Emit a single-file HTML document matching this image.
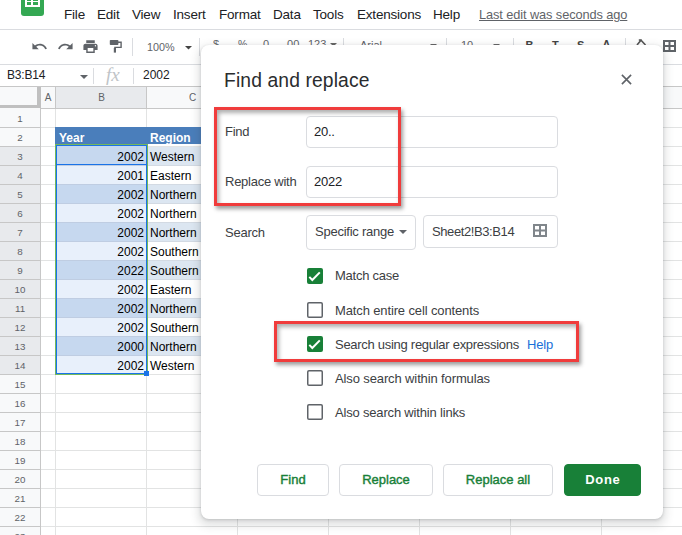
<!DOCTYPE html>
<html><head><meta charset="utf-8">
<style>
*{box-sizing:border-box;margin:0;padding:0}
html,body{width:682px;height:535px;overflow:hidden;background:#fff}
body{position:relative;font-family:"Liberation Sans",sans-serif;color:#202124}
.a{position:absolute;white-space:pre}
.menu{font-size:13.5px;color:#202124;top:7.2px;line-height:16px;letter-spacing:-0.2px}
.ln{position:absolute;background:#dadce0}
.ic{position:absolute;width:17px;height:17px;fill:#5f6368}
.tb{position:absolute;font-size:12px;color:#5f6368;line-height:14px}
.vs{position:absolute;width:1px;background:#dadce0}
/* grid */
.rh{position:absolute;left:0;width:40px;height:19px;background:#f8f9fa;font-size:9.8px;overflow:hidden;color:#5f6368;text-align:center;line-height:19px}
.hl{position:absolute;height:1px;background:#e2e3e3}
.vl{position:absolute;width:1px;background:#e2e3e3}
.cell{position:absolute;font-size:12px;line-height:19px;color:#000}
/* dialog */
#dlg{position:absolute;left:201px;top:45px;width:462px;height:474px;background:#fff;border-radius:8px;
 box-shadow:0 1px 3px 0 rgba(60,64,67,.22),0 4px 8px 3px rgba(60,64,67,.15)}
.lbl{position:absolute;font-size:13px;color:#3c4043;letter-spacing:-0.25px;line-height:16px}
.inp{position:absolute;border:1px solid #dadce0;border-radius:4px;background:#fff}
.cb{position:absolute;width:16px;height:16px;border:2px solid #5f6368;border-radius:2px}
.cbo{position:absolute;width:16px;height:16px;border-radius:2px;box-shadow:inset 0 0 0 1.5px #5f6368}
.cbon{background:#188038;border-color:#188038}
.btn{position:absolute;top:464px;height:32px;border:1px solid #dadce0;border-radius:4px;background:#fff;color:#188038;font-size:13px;font-weight:400;-webkit-text-stroke:0.4px #188038;text-align:center;line-height:30px}
.red{position:absolute;border:3px solid #f03c3c;box-shadow:2px 3px 4px rgba(0,0,0,.38),inset 2px 3px 4px rgba(0,0,0,.32)}
</style></head><body>

<!-- logo -->
<div class="a" style="left:21px;top:-10px;width:23px;height:26px;background:#34a853;border-radius:3px"></div>
<div class="a" style="left:25px;top:-4px;width:15px;height:11px;background:#fff"></div>
<div class="a" style="left:27px;top:-2px;width:4px;height:3px;background:#34a853"></div>
<div class="a" style="left:33px;top:-2px;width:5px;height:3px;background:#34a853"></div>
<div class="a" style="left:27px;top:2px;width:4px;height:3px;background:#34a853"></div>
<div class="a" style="left:33px;top:2px;width:5px;height:3px;background:#34a853"></div>

<!-- menu -->
<div class="a menu" style="left:64px">File</div>
<div class="a menu" style="left:97px">Edit</div>
<div class="a menu" style="left:132px">View</div>
<div class="a menu" style="left:173px">Insert</div>
<div class="a menu" style="left:219px">Format</div>
<div class="a menu" style="left:273px">Data</div>
<div class="a menu" style="left:313px">Tools</div>
<div class="a menu" style="left:357px">Extensions</div>
<div class="a menu" style="left:433px">Help</div>
<div class="a menu" style="left:479px;color:#5f6368;font-size:12.8px;letter-spacing:-0.1px;top:7px;text-decoration:underline">Last edit was seconds ago</div>

<div class="ln" style="left:0;top:29px;width:682px;height:1px"></div>

<!-- toolbar -->
<svg class="ic" style="left:31px;top:37.8px" viewBox="0 0 24 24"><path d="M12.5 8c-2.65 0-5.050.99-6.9 2.6L2 7v9h9l-3.62-3.62c1.39-1.16 3.160-1.880 5.12-1.88 3.54 0 6.55 2.31 7.6 5.5l2.37-.78C21.08 11.03 17.15 8 12.5 8z"/></svg>
<svg class="ic" style="left:57px;top:37.8px" viewBox="0 0 24 24"><path d="M18.4 10.6C16.55 8.99 14.15 8 11.5 8c-4.65 0-8.58 3.03-9.96 7.22L3.9 16c1.05-3.19 4.05-5.5 7.6-5.5 1.95 0 3.73.72 5.12 1.88L13 16h9V7l-3.6 3.6z"/></svg>
<svg class="ic" style="left:82.1px;top:38px" viewBox="0 0 24 24"><path d="M19 8H5c-1.66 0-3 1.34-3 3v6h4v4h12v-4h4v-6c0-1.66-1.34-3-3-3zm-3 11H8v-5h8v5zm3-7c-.55 0-1-.45-1-1s.45-1 1-1 1 .45 1 1-.45 1-1 1zm-1-9H6v4h12V3z"/></svg>
<svg class="a" style="left:109px;top:39px" width="14" height="15" viewBox="0 0 14 15"><rect x="0.8" y="1" width="8.6" height="5" rx="0.8" fill="#5f6368"/><path d="M9 3.3h3.1v5.1H5.9v1.2" stroke="#5f6368" stroke-width="1.4" fill="none"/><rect x="4.8" y="9" width="2.2" height="4.6" fill="#5f6368"/></svg>
<div class="vs" style="left:132px;top:38px;height:18px"></div>
<div class="tb" style="left:147px;top:39.5px;font-size:10.8px">100%</div>
<svg class="a" style="left:185px;top:45.7px" width="7" height="4"><path d="M0 0h7L3.5 3.5z" fill="#444"/></svg>
<div class="vs" style="left:199px;top:38px;height:18px"></div>
<div class="tb" style="left:213px;top:36.5px;font-size:11px">$</div>
<div class="tb" style="left:238px;top:37px;font-size:10.5px">%</div>
<div class="tb" style="left:260px;top:36.5px;font-size:11px">.0</div>
<div class="tb" style="left:284px;top:36.5px;font-size:11px">.00</div>
<div class="tb" style="left:308px;top:36.5px;font-size:11px">123</div>
<svg class="a" style="left:330px;top:43px" width="7" height="4"><path d="M0 0h7L3.5 3.5z" fill="#666"/></svg>
<div class="vs" style="left:343px;top:38px;height:18px"></div>
<div class="tb" style="left:360px;top:37.5px;font-size:11px">Arial</div>
<svg class="a" style="left:430px;top:43.5px" width="7" height="4"><path d="M0 0h7L3.5 3.5z" fill="#666"/></svg>
<div class="vs" style="left:446px;top:38px;height:18px"></div>
<div class="tb" style="left:461px;top:37.5px;font-size:11px">10</div>
<svg class="a" style="left:493px;top:43.5px" width="7" height="4"><path d="M0 0h7L3.5 3.5z" fill="#666"/></svg>
<div class="vs" style="left:513px;top:38px;height:18px"></div>
<div class="tb" style="left:525.5px;top:37.5px;font-weight:700;font-size:11px;color:#444">B</div>
<div class="tb" style="left:552px;top:37.5px;font-weight:700;font-size:11px;color:#444">T</div>
<div class="tb" style="left:577px;top:37.5px;font-weight:700;font-size:11px;color:#444">S</div>
<div class="tb" style="left:602.5px;top:37px;font-weight:700;font-size:11px;color:#444">A</div>
<div class="vs" style="left:625px;top:38px;height:18px"></div>
<svg class="a" style="left:636px;top:38px" width="11" height="8"><path d="M1 7L5 2.2l4.5 4.8M2.8 2h3" stroke="#555" stroke-width="1.6" fill="none"/></svg>
<!-- borders icon -->
<svg class="a" style="left:663px;top:40px" width="13" height="12" viewBox="0 0 13 12"><path d="M0 0h13v12H0zM2 2v3h3.5V2zm5.5 0v3H11V2zM2 7v3h3.5V7zm5.5 0v3H11V7z" fill="#5f6368" fill-rule="evenodd"/></svg>

<div class="ln" style="left:0;top:64px;width:682px;height:1px"></div>

<!-- formula bar -->
<div class="a" style="left:7px;top:68px;font-size:12px;line-height:14px;color:#202124;letter-spacing:-0.2px">B3:B14</div>
<svg class="a" style="left:80px;top:75px" width="8" height="4"><path d="M0 0h8L4 4z" fill="#5f6368"/></svg>
<div class="vs" style="left:93px;top:68px;height:16px"></div>
<div class="a" style="left:106px;top:65px;font-family:'Liberation Serif',serif;font-style:italic;font-size:19px;line-height:20px;color:#c0c4c8">fx</div>
<div class="vs" style="left:133px;top:68px;height:16px"></div>
<div class="a" style="left:143px;top:68px;font-size:12px;line-height:14px;color:#202124">2002</div>

<div class="ln" style="left:0;top:86px;width:682px;height:1px;background:#c7c7c7"></div>

<!-- header row -->
<div class="a" style="left:0;top:87px;width:682px;height:21px;background:#f8f9fa"></div>
<div class="a" style="left:56px;top:87px;width:90px;height:21px;background:#e8eaed"></div>
<div class="a" style="left:37px;top:87px;width:4px;height:22px;background:#c0c0c0"></div>
<div class="a" style="left:0;top:105px;width:41px;height:4px;background:#c0c0c0"></div>
<div class="a" style="left:0;top:108px;width:682px;height:1px;background:#c7c7c7"></div>
<div class="a" style="left:55px;top:87px;width:1px;height:21px;background:#c7c7c7"></div>
<div class="a" style="left:146px;top:87px;width:1px;height:21px;background:#c7c7c7"></div>
<div class="a" style="left:41px;top:87px;width:14px;height:21px;font-size:10px;line-height:21px;text-align:center;color:#5f6368">A</div>
<div class="a" style="left:56px;top:87px;width:91px;height:21px;font-size:10px;line-height:21px;text-align:center;color:#5f6368">B</div>
<div class="a" style="left:147px;top:87px;width:91px;height:21px;font-size:10px;line-height:21px;text-align:center;color:#5f6368">C</div>

<div id="grid">
<div class="rh" style="top:108px;height:19px;background:#f8f9fa;line-height:22px">1</div>
<div class="rh" style="top:127px;height:19px;background:#f8f9fa;line-height:22px">2</div>
<div class="rh" style="top:146px;height:19px;background:#e8eaed;line-height:22px">3</div>
<div class="rh" style="top:165px;height:19px;background:#e8eaed;line-height:22px">4</div>
<div class="rh" style="top:184px;height:19px;background:#e8eaed;line-height:22px">5</div>
<div class="rh" style="top:203px;height:19px;background:#e8eaed;line-height:22px">6</div>
<div class="rh" style="top:222px;height:19px;background:#e8eaed;line-height:22px">7</div>
<div class="rh" style="top:241px;height:19px;background:#e8eaed;line-height:22px">8</div>
<div class="rh" style="top:260px;height:19px;background:#e8eaed;line-height:22px">9</div>
<div class="rh" style="top:279px;height:19px;background:#e8eaed;line-height:22px">10</div>
<div class="rh" style="top:298px;height:19px;background:#e8eaed;line-height:22px">11</div>
<div class="rh" style="top:317px;height:19px;background:#e8eaed;line-height:22px">12</div>
<div class="rh" style="top:336px;height:19px;background:#e8eaed;line-height:22px">13</div>
<div class="rh" style="top:355px;height:19px;background:#e8eaed;line-height:22px">14</div>
<div class="rh" style="top:374px;height:19px;background:#f8f9fa;line-height:22px">15</div>
<div class="rh" style="top:393px;height:19px;background:#f8f9fa;line-height:22px">16</div>
<div class="rh" style="top:412px;height:19px;background:#f8f9fa;line-height:22px">17</div>
<div class="rh" style="top:431px;height:19px;background:#f8f9fa;line-height:22px">18</div>
<div class="rh" style="top:450px;height:19px;background:#f8f9fa;line-height:22px">19</div>
<div class="rh" style="top:469px;height:19px;background:#f8f9fa;line-height:22px">20</div>
<div class="rh" style="top:488px;height:19px;background:#f8f9fa;line-height:22px">21</div>
<div class="rh" style="top:507px;height:19px;background:#f8f9fa;line-height:22px">22</div>
<div class="rh" style="top:526px;height:19px;background:#f8f9fa;line-height:22px">23</div>
<div class="hl" style="left:0;top:127px;width:40px;background:#c7c7c7"></div>
<div class="hl" style="left:41px;top:127px;width:641px"></div>
<div class="hl" style="left:0;top:146px;width:40px;background:#c7c7c7"></div>
<div class="hl" style="left:41px;top:146px;width:641px"></div>
<div class="hl" style="left:0;top:165px;width:40px;background:#c7c7c7"></div>
<div class="hl" style="left:41px;top:165px;width:641px"></div>
<div class="hl" style="left:0;top:184px;width:40px;background:#c7c7c7"></div>
<div class="hl" style="left:41px;top:184px;width:641px"></div>
<div class="hl" style="left:0;top:203px;width:40px;background:#c7c7c7"></div>
<div class="hl" style="left:41px;top:203px;width:641px"></div>
<div class="hl" style="left:0;top:222px;width:40px;background:#c7c7c7"></div>
<div class="hl" style="left:41px;top:222px;width:641px"></div>
<div class="hl" style="left:0;top:241px;width:40px;background:#c7c7c7"></div>
<div class="hl" style="left:41px;top:241px;width:641px"></div>
<div class="hl" style="left:0;top:260px;width:40px;background:#c7c7c7"></div>
<div class="hl" style="left:41px;top:260px;width:641px"></div>
<div class="hl" style="left:0;top:279px;width:40px;background:#c7c7c7"></div>
<div class="hl" style="left:41px;top:279px;width:641px"></div>
<div class="hl" style="left:0;top:298px;width:40px;background:#c7c7c7"></div>
<div class="hl" style="left:41px;top:298px;width:641px"></div>
<div class="hl" style="left:0;top:317px;width:40px;background:#c7c7c7"></div>
<div class="hl" style="left:41px;top:317px;width:641px"></div>
<div class="hl" style="left:0;top:336px;width:40px;background:#c7c7c7"></div>
<div class="hl" style="left:41px;top:336px;width:641px"></div>
<div class="hl" style="left:0;top:355px;width:40px;background:#c7c7c7"></div>
<div class="hl" style="left:41px;top:355px;width:641px"></div>
<div class="hl" style="left:0;top:374px;width:40px;background:#c7c7c7"></div>
<div class="hl" style="left:41px;top:374px;width:641px"></div>
<div class="hl" style="left:0;top:393px;width:40px;background:#c7c7c7"></div>
<div class="hl" style="left:41px;top:393px;width:641px"></div>
<div class="hl" style="left:0;top:412px;width:40px;background:#c7c7c7"></div>
<div class="hl" style="left:41px;top:412px;width:641px"></div>
<div class="hl" style="left:0;top:431px;width:40px;background:#c7c7c7"></div>
<div class="hl" style="left:41px;top:431px;width:641px"></div>
<div class="hl" style="left:0;top:450px;width:40px;background:#c7c7c7"></div>
<div class="hl" style="left:41px;top:450px;width:641px"></div>
<div class="hl" style="left:0;top:469px;width:40px;background:#c7c7c7"></div>
<div class="hl" style="left:41px;top:469px;width:641px"></div>
<div class="hl" style="left:0;top:488px;width:40px;background:#c7c7c7"></div>
<div class="hl" style="left:41px;top:488px;width:641px"></div>
<div class="hl" style="left:0;top:507px;width:40px;background:#c7c7c7"></div>
<div class="hl" style="left:41px;top:507px;width:641px"></div>
<div class="hl" style="left:0;top:526px;width:40px;background:#c7c7c7"></div>
<div class="hl" style="left:41px;top:526px;width:641px"></div>
<div class="hl" style="left:0;top:545px;width:40px;background:#c7c7c7"></div>
<div class="hl" style="left:41px;top:545px;width:641px"></div>
<div class="vl" style="left:40px;top:109px;height:426px;background:#c7c7c7"></div>
<div class="vl" style="left:55px;top:109px;height:426px"></div>
<div class="vl" style="left:146px;top:109px;height:426px"></div>
<div class="vl" style="left:237px;top:109px;height:426px"></div>
<div class="vl" style="left:328px;top:109px;height:426px"></div>
<div class="vl" style="left:419px;top:109px;height:426px"></div>
<div class="vl" style="left:510px;top:109px;height:426px"></div>
<div class="vl" style="left:601px;top:109px;height:426px"></div>
<div class="a" style="left:55px;top:127px;width:183px;height:17px;background:#4a7ebb"></div>
<div class="cell" style="left:59px;top:129px;color:#fff;font-weight:700">Year</div>
<div class="cell" style="left:150px;top:129px;color:#fff;font-weight:700">Region</div>
<div class="a" style="left:56px;top:146px;width:90px;height:19px;background:#c6d8ef"></div>
<div class="a" style="left:147px;top:147px;width:90px;height:18px;background:#dce6f1"></div>
<div class="cell" style="left:56px;top:148px;width:88px;text-align:right">2002</div>
<div class="cell" style="left:150px;top:148px">Western</div>
<div class="a" style="left:56px;top:165px;width:90px;height:19px;background:#e8f0fb"></div>
<div class="a" style="left:56px;top:165px;width:90px;height:1px;background:#bfcde2"></div>
<div class="a" style="left:147px;top:165px;width:91px;height:1px;background:#d3dae3"></div>
<div class="a" style="left:147px;top:166px;width:90px;height:18px;background:#ffffff"></div>
<div class="cell" style="left:56px;top:167px;width:88px;text-align:right">2001</div>
<div class="cell" style="left:150px;top:167px">Eastern</div>
<div class="a" style="left:56px;top:184px;width:90px;height:19px;background:#c6d8ef"></div>
<div class="a" style="left:56px;top:184px;width:90px;height:1px;background:#bfcde2"></div>
<div class="a" style="left:147px;top:184px;width:91px;height:1px;background:#d3dae3"></div>
<div class="a" style="left:147px;top:185px;width:90px;height:18px;background:#dce6f1"></div>
<div class="cell" style="left:56px;top:186px;width:88px;text-align:right">2002</div>
<div class="cell" style="left:150px;top:186px">Northern</div>
<div class="a" style="left:56px;top:203px;width:90px;height:19px;background:#e8f0fb"></div>
<div class="a" style="left:56px;top:203px;width:90px;height:1px;background:#bfcde2"></div>
<div class="a" style="left:147px;top:203px;width:91px;height:1px;background:#d3dae3"></div>
<div class="a" style="left:147px;top:204px;width:90px;height:18px;background:#ffffff"></div>
<div class="cell" style="left:56px;top:205px;width:88px;text-align:right">2002</div>
<div class="cell" style="left:150px;top:205px">Northern</div>
<div class="a" style="left:56px;top:222px;width:90px;height:19px;background:#c6d8ef"></div>
<div class="a" style="left:56px;top:222px;width:90px;height:1px;background:#bfcde2"></div>
<div class="a" style="left:147px;top:222px;width:91px;height:1px;background:#d3dae3"></div>
<div class="a" style="left:147px;top:223px;width:90px;height:18px;background:#dce6f1"></div>
<div class="cell" style="left:56px;top:224px;width:88px;text-align:right">2002</div>
<div class="cell" style="left:150px;top:224px">Northern</div>
<div class="a" style="left:56px;top:241px;width:90px;height:19px;background:#e8f0fb"></div>
<div class="a" style="left:56px;top:241px;width:90px;height:1px;background:#bfcde2"></div>
<div class="a" style="left:147px;top:241px;width:91px;height:1px;background:#d3dae3"></div>
<div class="a" style="left:147px;top:242px;width:90px;height:18px;background:#ffffff"></div>
<div class="cell" style="left:56px;top:243px;width:88px;text-align:right">2002</div>
<div class="cell" style="left:150px;top:243px">Southern</div>
<div class="a" style="left:56px;top:260px;width:90px;height:19px;background:#c6d8ef"></div>
<div class="a" style="left:56px;top:260px;width:90px;height:1px;background:#bfcde2"></div>
<div class="a" style="left:147px;top:260px;width:91px;height:1px;background:#d3dae3"></div>
<div class="a" style="left:147px;top:261px;width:90px;height:18px;background:#dce6f1"></div>
<div class="cell" style="left:56px;top:262px;width:88px;text-align:right">2022</div>
<div class="cell" style="left:150px;top:262px">Southern</div>
<div class="a" style="left:56px;top:279px;width:90px;height:19px;background:#e8f0fb"></div>
<div class="a" style="left:56px;top:279px;width:90px;height:1px;background:#bfcde2"></div>
<div class="a" style="left:147px;top:279px;width:91px;height:1px;background:#d3dae3"></div>
<div class="a" style="left:147px;top:280px;width:90px;height:18px;background:#ffffff"></div>
<div class="cell" style="left:56px;top:281px;width:88px;text-align:right">2002</div>
<div class="cell" style="left:150px;top:281px">Eastern</div>
<div class="a" style="left:56px;top:298px;width:90px;height:19px;background:#c6d8ef"></div>
<div class="a" style="left:56px;top:298px;width:90px;height:1px;background:#bfcde2"></div>
<div class="a" style="left:147px;top:298px;width:91px;height:1px;background:#d3dae3"></div>
<div class="a" style="left:147px;top:299px;width:90px;height:18px;background:#dce6f1"></div>
<div class="cell" style="left:56px;top:300px;width:88px;text-align:right">2002</div>
<div class="cell" style="left:150px;top:300px">Northern</div>
<div class="a" style="left:56px;top:317px;width:90px;height:19px;background:#e8f0fb"></div>
<div class="a" style="left:56px;top:317px;width:90px;height:1px;background:#bfcde2"></div>
<div class="a" style="left:147px;top:317px;width:91px;height:1px;background:#d3dae3"></div>
<div class="a" style="left:147px;top:318px;width:90px;height:18px;background:#ffffff"></div>
<div class="cell" style="left:56px;top:319px;width:88px;text-align:right">2002</div>
<div class="cell" style="left:150px;top:319px">Southern</div>
<div class="a" style="left:56px;top:336px;width:90px;height:19px;background:#c6d8ef"></div>
<div class="a" style="left:56px;top:336px;width:90px;height:1px;background:#bfcde2"></div>
<div class="a" style="left:147px;top:336px;width:91px;height:1px;background:#d3dae3"></div>
<div class="a" style="left:147px;top:337px;width:90px;height:18px;background:#dce6f1"></div>
<div class="cell" style="left:56px;top:338px;width:88px;text-align:right">2000</div>
<div class="cell" style="left:150px;top:338px">Northern</div>
<div class="a" style="left:56px;top:355px;width:90px;height:19px;background:#e8f0fb"></div>
<div class="a" style="left:56px;top:355px;width:90px;height:1px;background:#bfcde2"></div>
<div class="a" style="left:147px;top:355px;width:91px;height:1px;background:#d3dae3"></div>
<div class="a" style="left:147px;top:356px;width:90px;height:18px;background:#ffffff"></div>
<div class="cell" style="left:56px;top:357px;width:88px;text-align:right">2002</div>
<div class="cell" style="left:150px;top:357px">Western</div>
<div class="a" style="left:55px;top:144px;width:93px;height:231px;border:1px solid #74b85c"></div>
<div class="a" style="left:56px;top:145px;width:91px;height:229px;border:1px solid #1a73e8"></div>
<div class="a" style="left:56px;top:145px;width:91px;height:20px;border:1px solid #1a73e8"></div>
<div class="a" style="left:144px;top:371px;width:5px;height:5px;background:#1a73e8"></div>
</div>

<!-- dialog -->
<div id="dlg"></div>
<div class="a" style="left:224px;top:69.5px;font-size:19.3px;line-height:22px;color:#2a2c2e;letter-spacing:0.12px">Find and replace</div>
<svg class="a" style="left:620px;top:72.5px" width="13" height="13" viewBox="0 0 13 13"><path d="M1.9 1.9l9.2 9.2M11.1 1.9l-9.2 9.2" stroke="#5f6368" stroke-width="1.6"/></svg>

<div class="lbl" style="left:225px;top:124px">Find</div>
<div class="lbl" style="left:225px;top:174px">Replace with</div>
<div class="inp" style="left:306px;top:116px;width:252px;height:32px"></div>
<div class="lbl" style="left:314px;top:124px;color:#202124">20..</div>
<div class="inp" style="left:306px;top:166px;width:252px;height:32px"></div>
<div class="lbl" style="left:314px;top:174px;color:#202124">2022</div>

<div class="lbl" style="left:225px;top:225px">Search</div>
<div class="inp" style="left:306px;top:215px;width:110px;height:35px"></div>
<div class="lbl" style="left:315px;top:224px;color:#3c4043">Specific range</div>
<svg class="a" style="left:399px;top:230.3px" width="8" height="4"><path d="M0 0h8L4 4z" fill="#5f6368"/></svg>
<div class="inp" style="left:423px;top:215px;width:135px;height:33px"></div>
<div class="lbl" style="left:432px;top:224px;letter-spacing:-0.4px">Sheet2!B3:B14</div>
<svg class="a" style="left:533px;top:224px" width="14" height="13" viewBox="0 0 14 13"><path d="M0 0h14v13H0zM2 2v3.5h4V2zm6 0v3.5h4V2zM2 7.5V11h4V7.5zm6 0V11h4V7.5z" fill="#80868b" fill-rule="evenodd"/></svg>

<div class="cb cbon" style="left:307px;top:268px"><svg width="16" height="16" viewBox="0 0 16 16" style="position:absolute;left:-2px;top:-2px"><path d="M2.3 8.9l3 3.1 7.5-7.6" stroke="#fff" stroke-width="2" fill="none"/></svg></div>
<div class="lbl" style="left:335px;top:268px">Match case</div>
<div class="cbo" style="left:307px;top:302px"></div>
<div class="lbl" style="left:335px;top:303px;letter-spacing:-0.13px">Match entire cell contents</div>
<div class="cb cbon" style="left:307px;top:336px"><svg width="16" height="16" viewBox="0 0 16 16" style="position:absolute;left:-2px;top:-2px"><path d="M2.3 8.9l3 3.1 7.5-7.6" stroke="#fff" stroke-width="2" fill="none"/></svg></div>
<div class="lbl" style="left:335px;top:337px;letter-spacing:-0.28px">Search using regular expressions</div>
<div class="lbl" style="left:527px;top:337px;color:#1a6fd8;letter-spacing:-0.2px">Help</div>
<div class="cbo" style="left:307px;top:370px"></div>
<div class="lbl" style="left:335px;top:371px;letter-spacing:-0.12px">Also search within formulas</div>
<div class="cbo" style="left:307px;top:404px"></div>
<div class="lbl" style="left:335px;top:405px;letter-spacing:-0.18px">Also search within links</div>

<div class="btn" style="left:257px;width:72px">Find</div>
<div class="btn" style="left:339px;width:94px">Replace</div>
<div class="btn" style="left:443px;width:110px">Replace all</div>
<div class="btn" style="left:564px;width:77px;background:#188038;border-color:#188038;color:#fff;font-weight:700;-webkit-text-stroke:0;letter-spacing:0.7px;text-indent:0.7px">Done</div>

<div class="red" style="left:214px;top:107px;width:187px;height:99px"></div>
<div class="red" style="left:274px;top:321px;width:305px;height:41px"></div>

</body></html>
